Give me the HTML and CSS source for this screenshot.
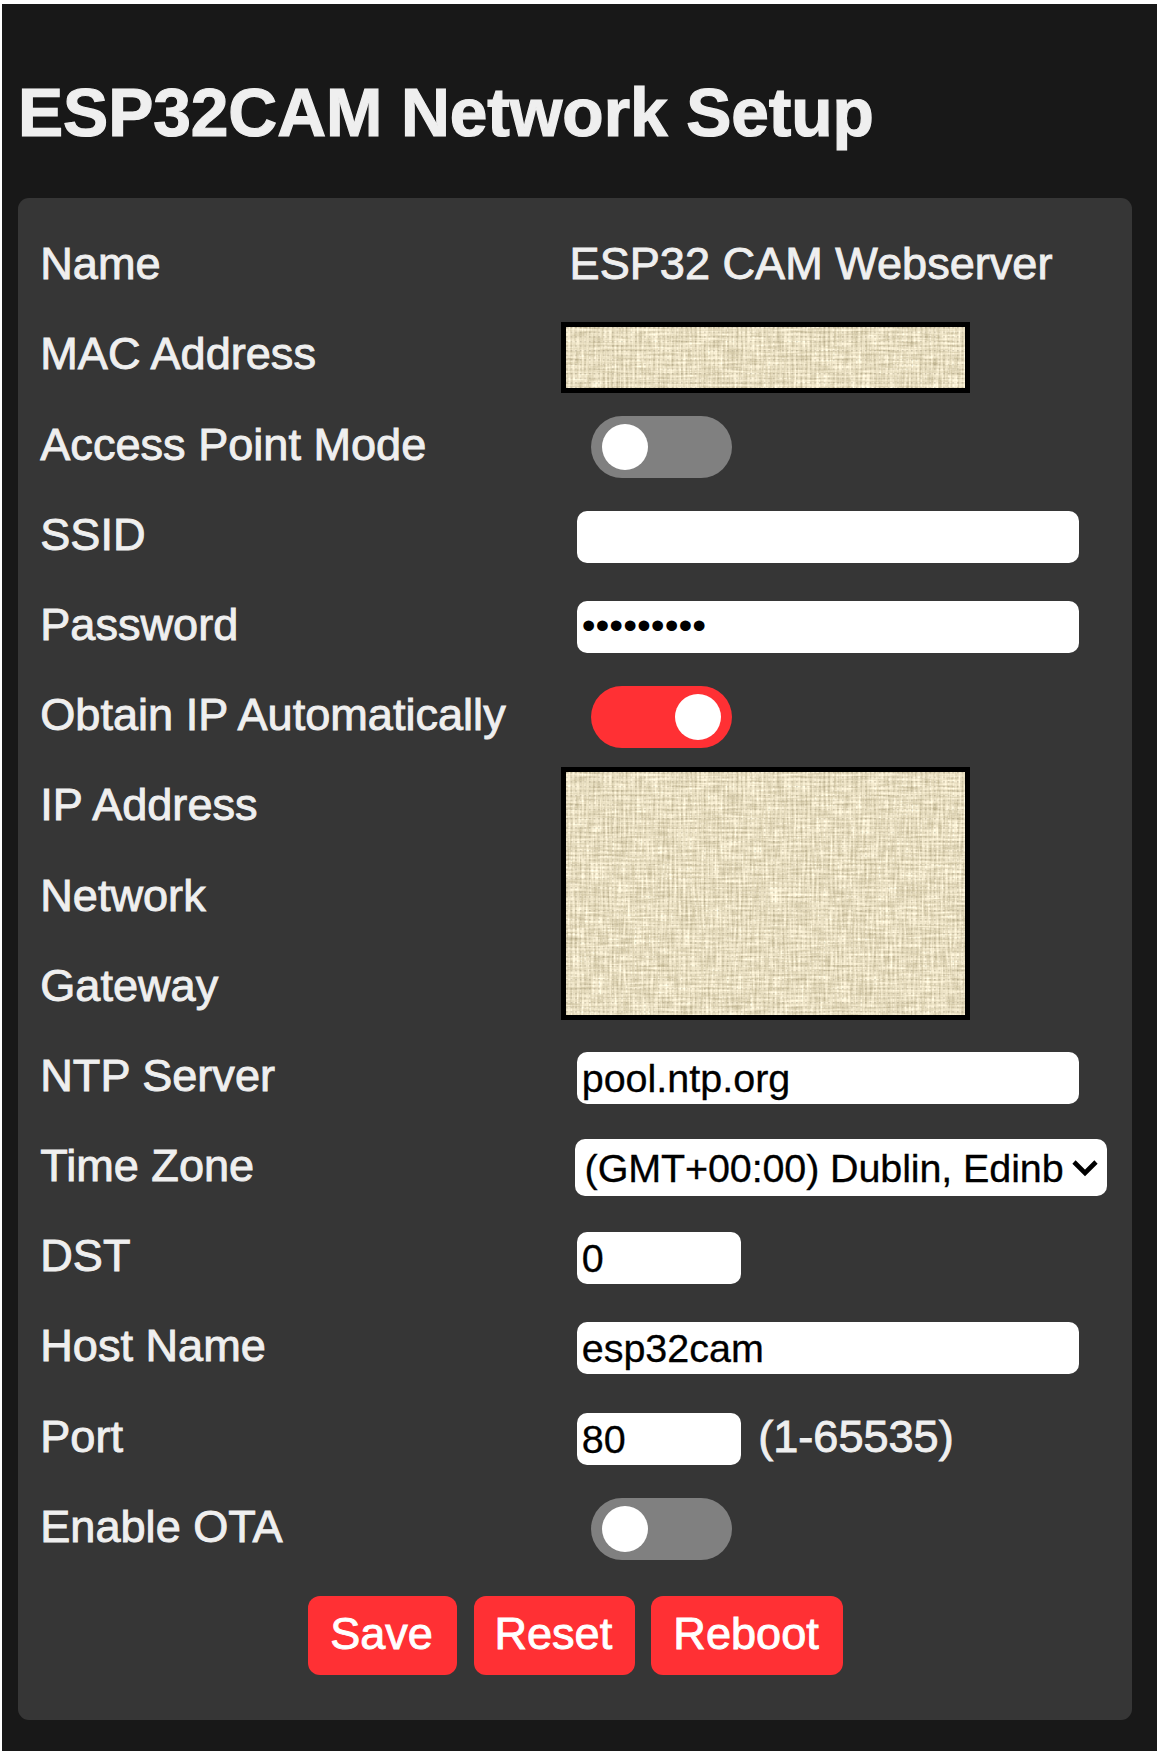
FILE: index.html
```html
<!DOCTYPE html>
<html lang="en">
<head>
<meta charset="utf-8">
<title>ESP32CAM Network Setup</title>
<link rel="stylesheet" href="styles.css">
</head>
<body>
<svg class="defs" width="0" height="0" aria-hidden="true">
  <filter id="linen" x="0" y="0" width="100%" height="100%" color-interpolation-filters="sRGB">
    <feTurbulence type="fractalNoise" baseFrequency="0.045 0.45" numOctaves="2" seed="3" result="weft"/>
    <feTurbulence type="fractalNoise" baseFrequency="0.45 0.045" numOctaves="2" seed="8" result="warp"/>
    <feComposite in="weft" in2="warp" operator="arithmetic" k1="0" k2="0.5" k3="0.5" k4="0"/>
    <feColorMatrix type="matrix" values="0.52 0 0 0 0.655  0.54 0 0 0 0.605  0.62 0 0 0 0.45  0 0 0 0 1"/>
  </filter>
  <pattern id="weave" width="4.6" height="4.6" patternUnits="userSpaceOnUse">
    <rect x="0" y="0" width="1.6" height="1.4" fill="#8d8468" fill-opacity="0.42"/>
    <rect x="2.300" y="2.300" width="1.6" height="1.4" fill="#fff8dc" fill-opacity="0.4"/>
  </pattern>
</svg>
<main class="page">
  <h1 class="title">ESP32CAM Network Setup</h1>
  <form class="panel">
    <div class="grid">
      <span class="label">Name</span><span class="value">ESP32 CAM Webserver</span>
      <span class="label">MAC Address</span>
      <div class="cover cover-mac"><svg width="100%" height="100%"><rect width="100%" height="100%" filter="url(#linen)"/><rect width="100%" height="100%" fill="url(#weave)"/></svg></div>
      <span class="label">Access Point Mode</span><span class="switch"><i class="knob"></i></span>
      <label class="label" for="ssid">SSID</label><input class="field" id="ssid" type="text">
      <label class="label" for="pass">Password</label><input class="field secret" id="pass" type="password" value="password1">
      <span class="label">Obtain IP Automatically</span><span class="switch on"><i class="knob"></i></span>
      <span class="label">IP Address</span>
      <div class="cover cover-ip"><svg width="100%" height="100%"><rect width="100%" height="100%" filter="url(#linen)"/><rect width="100%" height="100%" fill="url(#weave)"/></svg></div>
      <span class="label">Network</span>
      <span class="label">Gateway</span>
      <label class="label" for="ntp">NTP Server</label><input class="field" id="ntp" type="text" value="pool.ntp.org">
      <span class="label">Time Zone</span>
      <div class="picker">
        <span class="picked">(GMT+00:00) Dublin, Edinb</span>
        <svg class="chevron" width="26" height="18" viewBox="0 0 26 18"><path d="M2 3 L13 14 L24 3" fill="none" stroke="#000" stroke-width="4.6"/></svg>
      </div>
      <label class="label" for="dst">DST</label><input class="field short" id="dst" type="text" value="0">
      <label class="label" for="host">Host Name</label><input class="field" id="host" type="text" value="esp32cam">
      <label class="label" for="port">Port</label>
      <div class="group"><input class="field short" id="port" type="text" value="80"><span class="hint">(1-65535)</span></div>
      <span class="label">Enable OTA</span><span class="switch"><i class="knob"></i></span>
    </div>
    <div class="buttons">
      <button class="btn save" type="button">Save</button>
      <button class="btn reset" type="button">Reset</button>
      <button class="btn reboot" type="button">Reboot</button>
    </div>
  </form>
</main>
</body>
</html>
```
FILE: styles.css
```css
* { box-sizing: border-box; }
body {
  margin: 0;
  padding: 4px 2px 4px 2px;
  background: #fff;
  color: #efefef;
  font-family: "Liberation Sans", Arial, sans-serif;
  font-size: 45.1px;
}
.defs { display: block; }
.page {
  height: 1747px;
  padding: 70px 25.500px 0 16px;
  background: #181818;
}
.title {
  margin: 0 0 46px;
  font-size: 67.7px;
  line-height: 78px;
  letter-spacing: -0.08px;
  -webkit-text-stroke: 1.2px #efefef;
}
.panel {
  height: 1522px;
  padding: 22.6px 22px 0 22.300px;
  border-radius: 11px;
  background: #363636;
}
.grid {
  display: grid;
  grid-template-columns: 529.3px 1fr;
  grid-auto-rows: 90.2px;
  align-items: center;
}
.label, .value, .hint {
  padding-bottom: 3px;
  line-height: 52px;
  white-space: nowrap;
  -webkit-text-stroke: 0.9px #efefef;
}
.label { grid-column: 1; }
.value, .cover, .switch, .field, .picker, .group { grid-column: 2; }
.cover {
  width: 409px;
  margin-left: -9px;
  border: 5px solid #000;
  background: #e2d7bb;
}
.cover svg { display: block; }
.cover-mac { height: 71px; margin-top: 4px; }
.cover-ip { grid-row: 7 / span 3; height: 253px; margin-bottom: 8px; }
.switch {
  display: flex;
  align-items: center;
  width: 141px;
  height: 62px;
  margin: 1px 0 0 21.700px;
  padding: 0 11px;
  border-radius: 31px;
  background: #808080;
}
.switch.on { justify-content: flex-end; background: #ff3034; }
.knob { width: 46px; height: 46px; border-radius: 50%; background: #fff; }
.field {
  width: 501.500px;
  height: 52px;
  margin: 1px 0 0 7.600px;
  padding: 1px 4.500px 0;
  border: 0;
  border-radius: 10px;
  background: #fff;
  color: #000;
  font: 39.5px "Liberation Sans", Arial, sans-serif;
  -webkit-text-stroke: 0.3px #000;
}
.field.short { width: 164px; }
.field.secret { padding-top: 0; padding-bottom: 2px; -webkit-text-stroke: 0; }
.picker {
  display: flex;
  align-items: center;
  width: 532px;
  height: 57px;
  margin: 0 0 0 5px;
  padding: 0 9px 0 10px;
  border-radius: 10px;
  background: #fff;
  color: #000;
  font-size: 39.5px;
  -webkit-text-stroke: 0.3px #000;
}
.picked { flex: 1; white-space: nowrap; line-height: 50px; letter-spacing: -0.12px; }
.chevron { display: block; flex: none; }
.group { display: flex; align-items: center; }
.hint { margin-left: 17px; }
.buttons { display: flex; gap: 16.500px; margin: 22.500px 0 0 267.500px; }
.btn {
  height: 79.500px;
  padding: 0 2px 4px 0;
  border: 0;
  border-radius: 12px;
  background: #ff3034;
  color: #fff;
  font: 45.1px "Liberation Sans", Arial, sans-serif;
  -webkit-text-stroke: 0.9px #fff;
}
.save { width: 149.500px; }
.reset { width: 161px; }
.reboot { width: 191.500px; }
```
